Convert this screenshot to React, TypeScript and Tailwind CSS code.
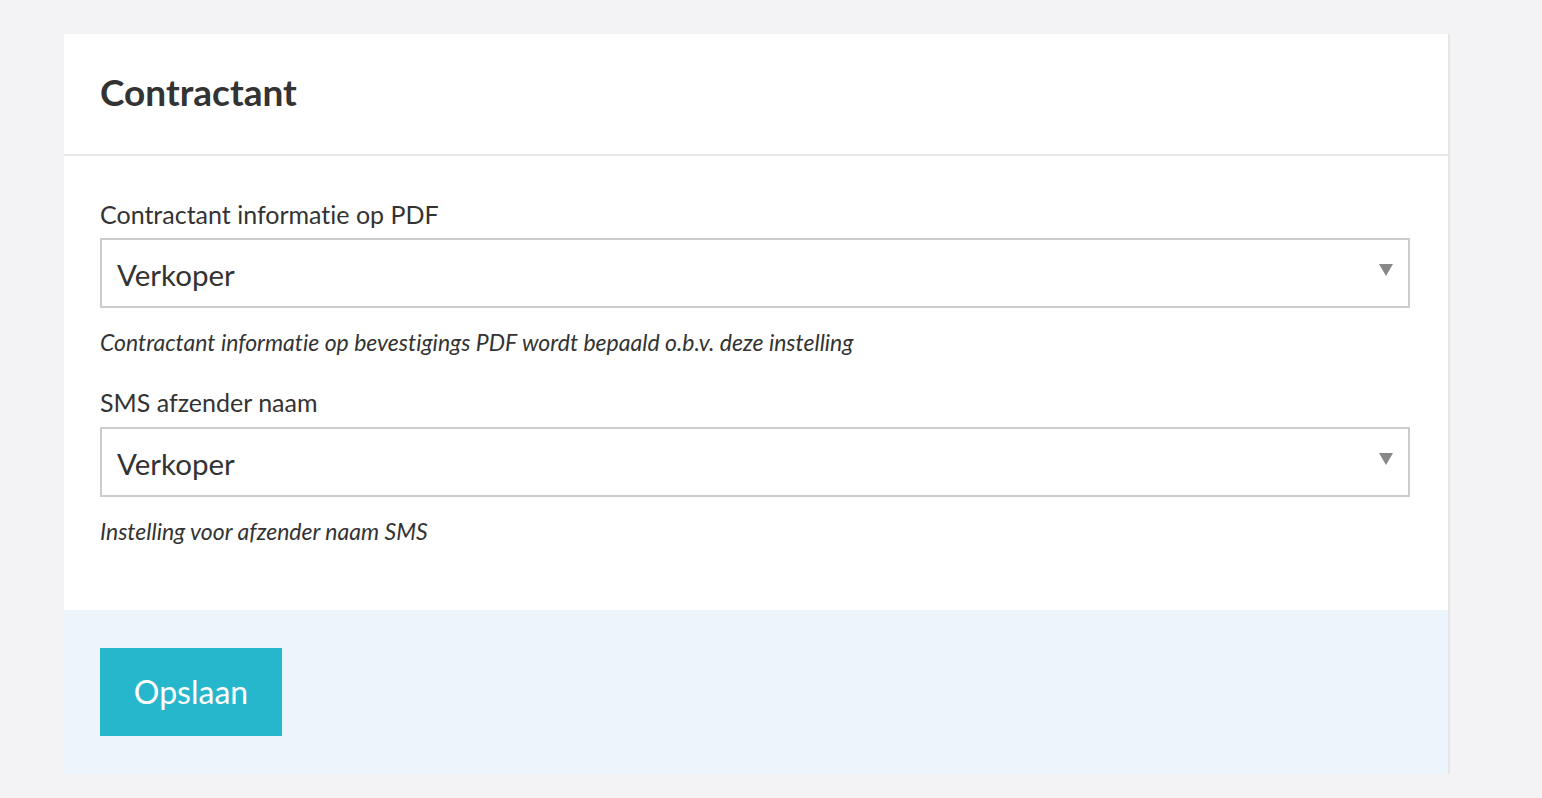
import React from "react";

function Select({ value }: { value: string }) {
  return (
    <div className="flex h-[70px] items-center justify-between border-2 border-[#cccccc] bg-white pl-[15px] pr-[15px]">
      <span className="pt-[4px] text-[29.5px] leading-none text-[#333333]">{value}</span>
      <svg width="14" height="12" viewBox="0 0 14 12" className="mt-[-6px]">
        <polygon points="0,0 14,0 7,12" fill="#888888" />
      </svg>
    </div>
  );
}

export default function App() {
  return (
    <div
      className="min-h-[798px] w-full bg-[#f3f3f5] pt-[34px] pl-[64px] [font-variant-ligatures:none] [font-feature-settings:'liga'_0,'clig'_0,'calt'_0,'dlig'_0]"
      style={{ fontFamily: "Lato, 'Noto Sans', sans-serif" }}
    >
      <div className="w-[1386px] border-r-2 border-[#e6e6e6] bg-white">
        <div className="flex h-[122px] items-center border-b-2 border-[#e8e8e8] pb-[5px] pl-[36px]">
          <h1 className="text-[37px] font-bold leading-none text-[#333333]">Contractant</h1>
        </div>
        <div className="pl-[36px] pr-[38px] pt-[43px] pb-[65px]">
          <div className="h-[30px] text-[25px] leading-[30px] text-[#333333]">Contractant informatie op PDF</div>
          <div className="mt-[9px]">
            <Select value="Verkoper" />
          </div>
          <div className="mt-[20px] h-[28px] text-[23px] italic leading-[28px] text-[#333333]">
            Contractant informatie op bevestigings PDF wordt bepaald o.b.v. deze instelling
          </div>
          <div className="mt-[31px] h-[30px] text-[25px] leading-[30px] text-[#333333]">SMS afzender naam</div>
          <div className="mt-[10px]">
            <Select value="Verkoper" />
          </div>
          <div className="mt-[20px] h-[28px] text-[23px] italic leading-[28px] text-[#333333]">
            Instelling voor afzender naam SMS
          </div>
        </div>
        <div className="bg-[#edf5fc] pl-[36px] py-[38px]">
          <button className="flex h-[88px] w-[182px] items-center justify-center bg-[#27b7cc] text-[32px] text-white">
            Opslaan
          </button>
        </div>
      </div>
    </div>
  );
}
